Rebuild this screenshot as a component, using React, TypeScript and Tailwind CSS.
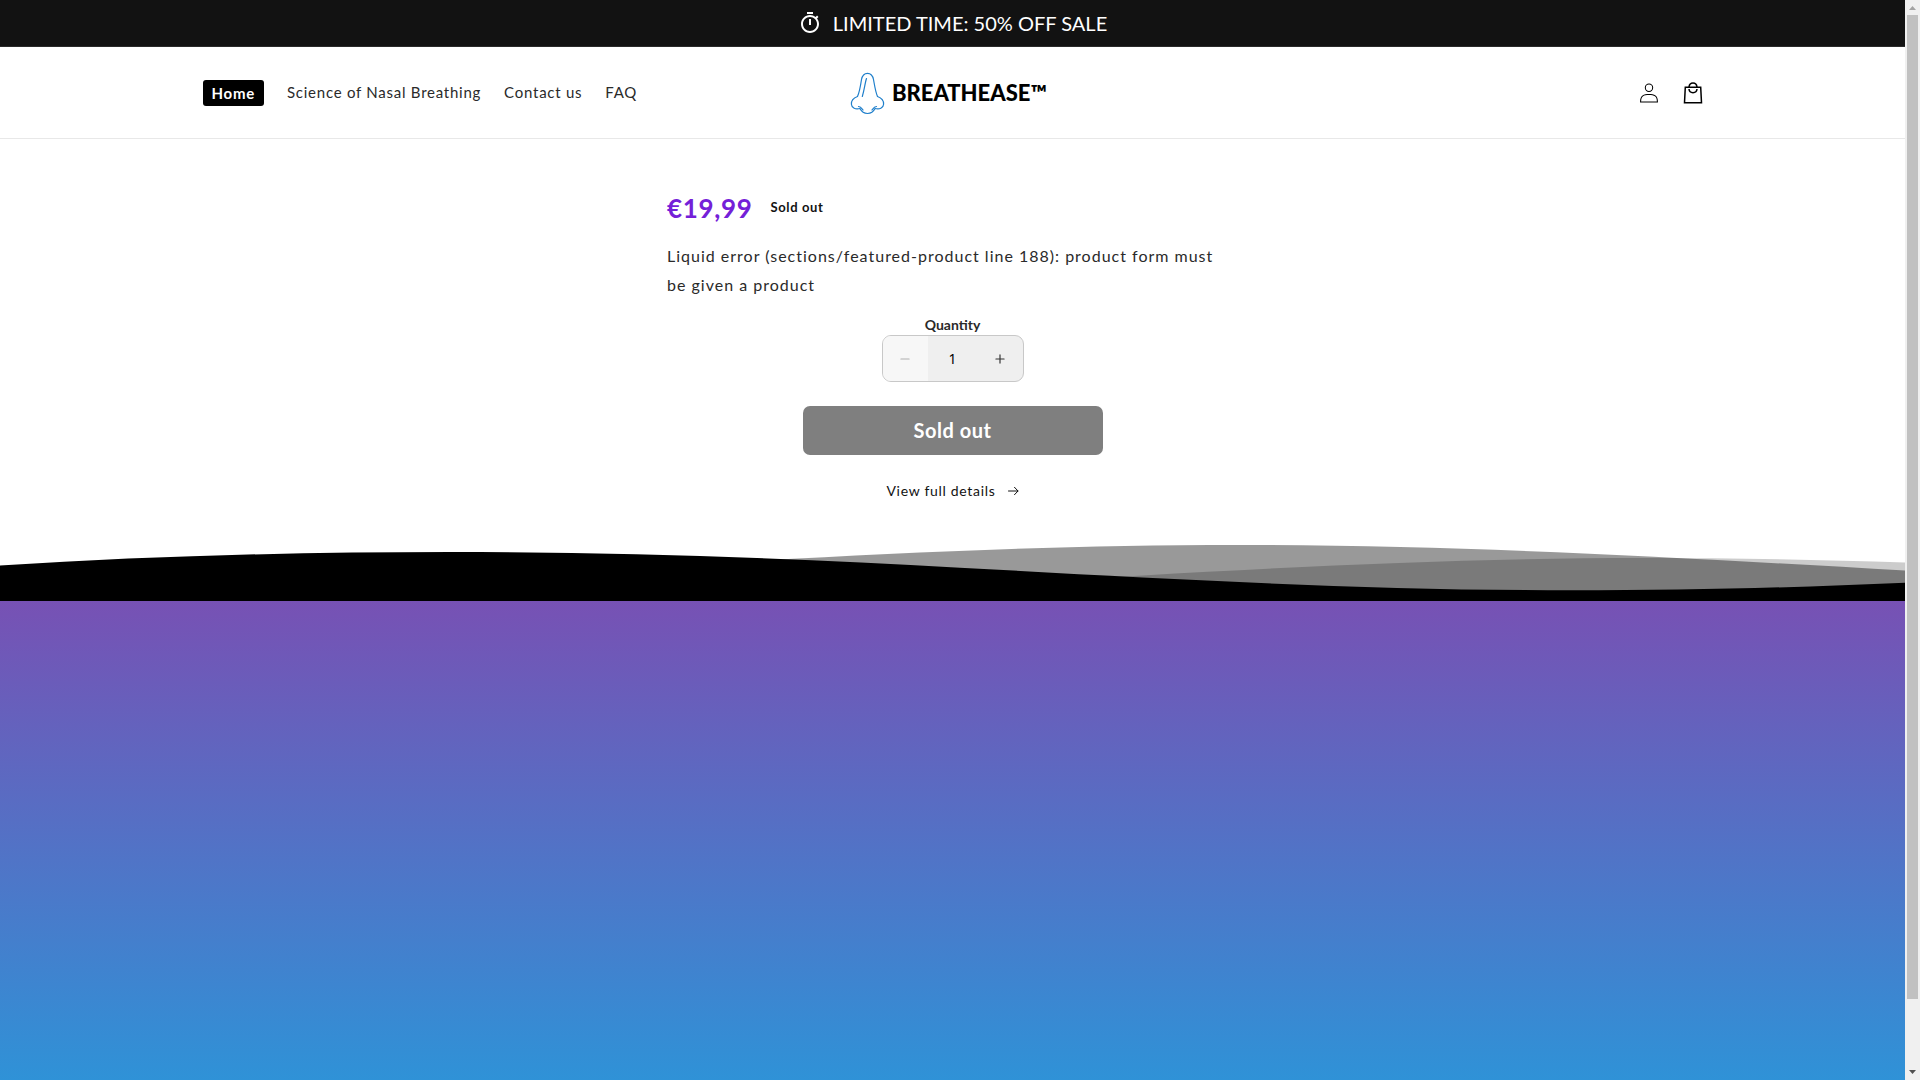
import { Minus, Plus } from "lucide-react";

const links = ["Science of Nasal Breathing", "Contact us", "FAQ"];

function Stopwatch() {
  return (
    <svg className="size-6" viewBox="0 0 24 24" fill="#fff" aria-hidden="true">
      <path d="M15 1H9v2h6V1zm-4 13h2V8h-2v6zm8.03-6.61 1.42-1.42c-.43-.51-.9-.99-1.41-1.41l-1.42 1.42C16.07 4.74 14.12 4 12 4c-4.97 0-9 4.03-9 9s4.02 9 9 9 9-4.03 9-9c0-2.12-.74-4.07-1.97-5.61zM12 20c-3.87 0-7-3.13-7-7s3.13-7 7-7 7 3.13 7 7-3.13 7-7 7z" />
    </svg>
  );
}

function Nose() {
  return (
    <svg className="mt-0.5 h-[43px] w-[35px]" viewBox="0 0 35 43" fill="none" stroke="#1f7fcb" strokeWidth="1.2" strokeLinecap="round" strokeLinejoin="round" aria-hidden="true">
      <path d="M7.5 24.5C9.5 20 10.600 13.500 11.500 7.500C12.300 3.300 14.200 1.300 17.500 1.300C20.800 1.300 22.700 3.300 23.500 7.500C24.600 13.500 25.500 20 27.500 24.500C31.500 26 33.800 29 33.600 32.200C33.300 36 29.500 37.800 25 36.500C23.300 40 20.800 41.500 17.500 41.500C14.200 41.500 11.700 40 10 36.500C5.500 37.800 1.700 36 1.400 32.200C1.200 29 3.500 26 7.500 24.500Z" />
      <path d="M16.500 6.500C15 11 14.300 18 12.300 24.500" />
      <path d="M8.500 34.500C10.500 34.500 11.500 36 13 38M26.500 34.500C24.500 34.500 23.500 36 22 38" />
    </svg>
  );
}

function Person() {
  return (
    <svg className="h-5 w-5" viewBox="0 0 18 19" fill="#000" aria-hidden="true">
      <path fillRule="evenodd" clipRule="evenodd" d="M6 4.5a3 3 0 116 0 3 3 0 01-6 0zm3-4a4 4 0 100 8 4 4 0 000-8zm5.58 12.15c1.12.82 1.83 2.24 1.91 4.85H1.51c.08-2.600.79-4.030 1.900-4.850C4.660 11.750 6.500 11.500 9 11.500s4.350.260 5.580 1.150zM9 10.500c-2.500 0-4.650.240-6.170 1.350C1.270 12.980.5 14.930.5 18v.5h17V18c0-3.070-.77-5.020-2.330-6.150-1.520-1.100-3.670-1.350-6.170-1.350z" />
    </svg>
  );
}

function Bag() {
  return (
    <svg className="size-11" viewBox="0 0 44 44" fill="none" stroke="#000" strokeWidth="1.5" aria-hidden="true">
      <path d="M14.300 16.200h15.400l.8 15.600h-17z" />
      <path d="M18 16c.3-2.600 1.800-4 4-4s3.700 1.400 4 4M18 18c.2 2.300 1.700 3.700 4 3.700s3.800-1.400 4-3.700" />
    </svg>
  );
}

function Waves() {
  return (
    <svg className="block h-14 w-full" viewBox="0 0 1905 56" preserveAspectRatio="none" aria-hidden="true">
      <path fillOpacity=".2" d="M900 45C1132 31 1400 13 1640 13C1740 13 1825 15 1905 17.500V56H900Z" />
      <path fillOpacity=".4" d="M600 25C796 13.500 1000 0 1238 0C1480 0 1700 14 1905 25.500V56H600Z" />
      <path d="M0 20.500C150 11 300 7 450 7C620 7 790 13 960 22.700C1150 33 1360 45.300 1572 45.300C1690 45.300 1800 42.500 1905 37.700V56H0Z" />
    </svg>
  );
}

function Scrollbar() {
  return (
    <div className="flex w-[15px] shrink-0 flex-col items-center bg-[#f0f0f0]" aria-hidden="true">
      <svg className="h-[15px] w-[15px]" viewBox="0 0 15 15" fill="#a3a3a3"><path d="M4 10h7L7.500 6z" /></svg>
      <div className="w-[11px] grow-[984] bg-[#c1c1c1]" />
      <div className="grow-[66]" />
      <svg className="h-[15px] w-[15px]" viewBox="0 0 15 15" fill="#505050"><path d="M4 5h7L7.500 9z" /></svg>
    </div>
  );
}

export default function App() {
  return (
    <div className="flex min-h-screen bg-white font-['Lato',sans-serif] text-[#2a2a2a]">
      <div className="flex min-w-0 flex-1 flex-col">
        <div className="flex h-[47px] shrink-0 items-center justify-center gap-[11px] border-b border-[#2a2a2a] bg-[#121212]">
          <Stopwatch />
          <p className="text-xl text-white">LIMITED TIME: 50% OFF SALE</p>
        </div>
        <header className="h-[92px] shrink-0 border-b border-[#e8e8e8]">
          <div className="mx-auto grid h-full max-w-[1500px] grid-cols-[1fr_auto_1fr] items-center">
            <nav className="flex items-center gap-[23px] text-[15px] tracking-wider">
              <a href="#" className="rounded-[3px] bg-black px-[9px] py-[3px] leading-5 font-bold text-white">Home</a>
              {links.map((l) => (
                <a key={l} href="#">{l}</a>
              ))}
            </nav>
            <a href="#" className="flex items-center gap-[7px] pr-2 text-black" aria-label="Breathease">
              <Nose />
              <span className="text-[22px] leading-6 font-black">BREATHEASE™</span>
            </a>
            <div className="-mr-3 flex justify-end">
              <button aria-label="Log in" className="flex size-11 items-center justify-center"><Person /></button>
              <button aria-label="Cart" className="flex size-11 items-center justify-center"><Bag /></button>
            </div>
          </div>
        </header>
        <main className="flex flex-1 flex-col">
          <section className="mx-auto flex w-full max-w-[571px] flex-col items-center pt-[49px]">
            <div className="flex items-center gap-[18px] self-start">
              <p className="text-[26px] leading-10 font-bold tracking-wide text-[#7420d8]">€19,99</p>
              <p className="text-[13px] font-bold tracking-wider text-[#121212]">Sold out</p>
            </div>
            <p className="mt-[13px] self-stretch pr-4 text-base leading-[29px] tracking-[1px]">
              Liquid error (sections/featured-product line 188): product form must be given a product
            </p>
            <label htmlFor="qty" className="mt-[17px] text-sm leading-[18px] font-bold">Quantity</label>
            <div className="mt-px flex h-[47px] w-[142px] overflow-hidden rounded-[9px] border border-[#c8c8c8] bg-[#efefef]">
              <button disabled aria-label="Decrease quantity" className="flex w-[45px] items-center justify-center bg-[#f7f7f7] text-[#b0b0b0]"><Minus size={14} /></button>
              <input id="qty" defaultValue="1" className="min-w-0 flex-1 bg-transparent text-center font-['Noto_Sans',sans-serif] text-sm text-black" />
              <button aria-label="Increase quantity" className="flex w-[45px] items-center justify-center text-[#333]"><Plus size={14} /></button>
            </div>
            <button disabled className="mt-6 h-[49px] w-[300px] rounded-[7px] bg-[#7f7f7f] pb-0.5 text-xl font-bold tracking-wide text-white">Sold out</button>
            <a href="#" className="mt-6 flex items-center gap-3 text-sm leading-6 tracking-wider text-[#121212]">
              View full details
              <svg className="h-[10px] w-[11px]" viewBox="0 0 11 10" fill="none" stroke="currentColor" strokeLinecap="round" strokeLinejoin="round" aria-hidden="true"><path d="M.5 5h9.500M6.500 1.300L10 5L6.500 8.700" /></svg>
            </a>
          </section>
          <div className="mt-[42px]"><Waves /></div>
          <div className="flex-1 bg-linear-to-b/srgb from-[#7751b4] to-[#2f92d7]" />
        </main>
      </div>
      <Scrollbar />
    </div>
  );
}
